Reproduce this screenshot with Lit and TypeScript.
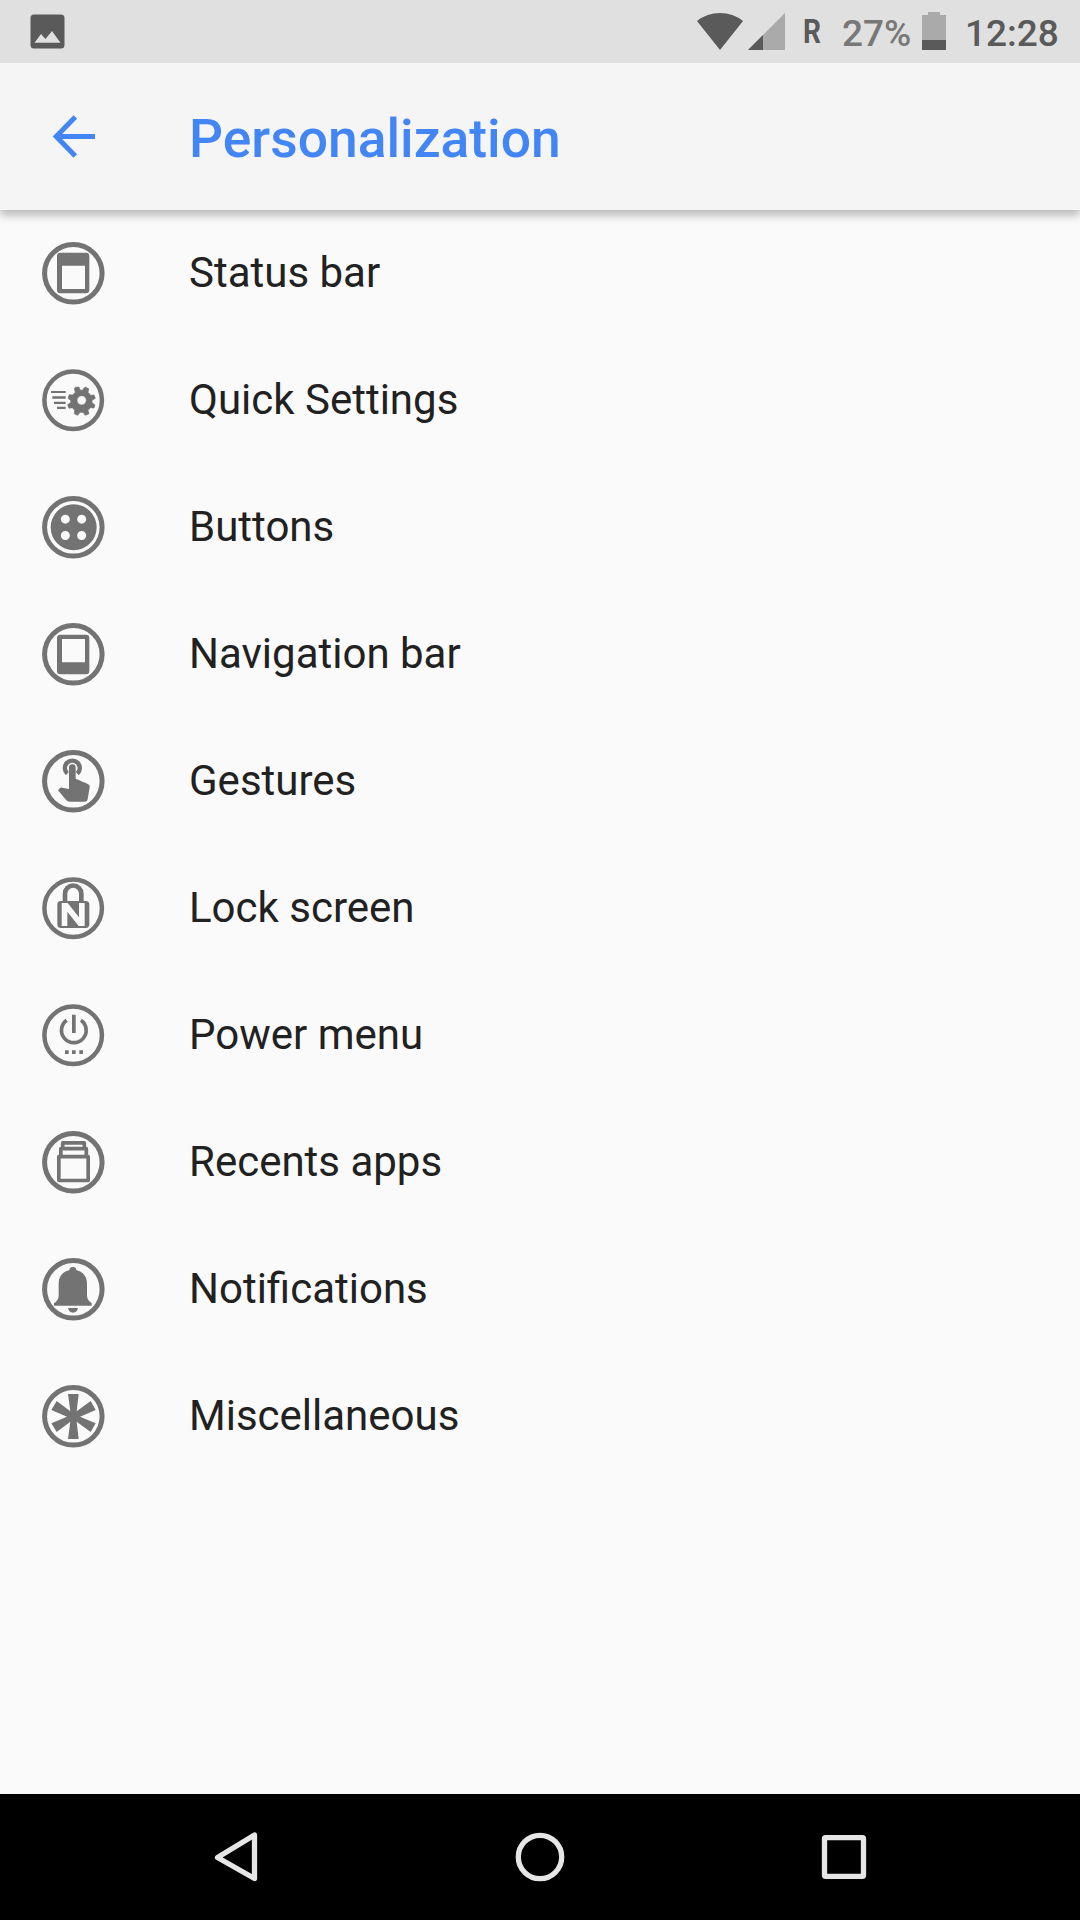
import { LitElement, html, css, svg } from "lit";
import { customElement } from "lit/decorators.js";

const thick = svg`<circle cx="94" cy="94" r="86.3" fill="none" stroke="#737373" stroke-width="15"/>`;
const thin = svg`<circle cx="93.5" cy="94" r="86.3" fill="none" stroke="#737373" stroke-width="13.500"/>`;

const items = [
  { label: "Status bar", icon: svg`${thick}
    <path fill-rule="evenodd" d="M55 32H132Q142 32 142 42V144Q142 154 132 154H55Q45 154 45 144V42Q45 32 55 32ZM60 71V141H129V71Z"/>` },
  { label: "Quick Settings", icon: svg`${thin}
    <path d="M27 66H71V72H27ZM31 82H71V89H31ZM36 98H71V105H36ZM45 113H71V120H45Z"/>
    <path fill-rule="evenodd" stroke="#737373" stroke-width="2" stroke-linejoin="round" d="M100 55L111 54L114 63Q118 64 122 63L129 54L140 59L138 70L146 79L156 78L160 88L150 94V101L159 108L156 117L145 116L138 124L141 134L130 139L123 130H114L107 139L97 134L98 124L91 116L81 118L77 107L86 101V94L78 88L82 77L92 78L100 70L97 59ZM119 80A14 14 0 1 0 119 108A14 14 0 1 0 119 80Z"/>` },
  { label: "Buttons", icon: svg`${thick}
    <path fill-rule="evenodd" d="M95 25A69 69 0 1 0 95 163A69 69 0 1 0 95 25ZM70 56A13.500 13.500 0 1 1 70 83A13.500 13.500 0 1 1 70 56ZM119 56A13.500 13.500 0 1 1 119 83A13.500 13.500 0 1 1 119 56ZM70 105A13.500 13.500 0 1 1 70 132A13.500 13.500 0 1 1 70 105ZM119 105A13.500 13.500 0 1 1 119 132A13.500 13.500 0 1 1 119 105Z"/>` },
  { label: "Navigation bar", icon: svg`${thick}
    <path fill-rule="evenodd" d="M55 35H132Q142 35 142 45V144Q142 154 132 154H55Q45 154 45 144V45Q45 35 55 35ZM60 48V118H129V48Z"/>` },
  { label: "Gestures", icon: svg`${thick}
    <path d="M81 77V53A10 10 0 0 1 101 53V86L138 102Q144 105 143 112L137 148Q136 155 129 155H83Q77 155 73 151L48 121L54 114Q57 112 61 113L81 117Z"/>
    <path d="M76 71A22.500 22.500 0 1 1 106 71" fill="none" stroke="#737373" stroke-width="13"/>` },
  { label: "Lock screen", icon: svg`${thin}
    <path d="M69 76V50A24.500 24.500 0 0 1 118 50V76" fill="none" stroke="#737373" stroke-width="14"/>
    <path fill-rule="evenodd" d="M57 72H131Q142 72 142 83V142Q142 153 131 153H57Q46 153 46 142V83Q46 72 57 72ZM59 78V147H76V104L110 147H128V78H111V121L77 78Z"/>` },
  { label: "Power menu", icon: svg`${thin}
    <path d="M90 32H101V87H90ZM69 139H80V150H69ZM90 139H101V150H90ZM112 139H123V150H112Z"/>
    <path d="M74 49A37 37 0 1 0 117 49" fill="none" stroke="#737373" stroke-width="11"/>` },
  { label: "Recents apps", icon: svg`${thick}
    <g fill="none" stroke="#737373" stroke-width="11" stroke-linejoin="round">
      <rect x="50.500" y="77" width="88" height="71.500"/>
      <path d="M56.500 73V53H133V73M62 50V35.500H127V50"/>
    </g>` },
  { label: "Notifications", icon: svg`${thick}
    <path d="M93 27Q102 27 103 36C124 42 135 56 135 77V112Q135 126 149 136V143H36V136Q50 127 50 112V77C50 56 61 42 82 36Q83 27 93 27ZM78 150H108Q105 164 93 164Q81 164 78 150Z"/>` },
  { label: "Miscellaneous", icon: svg`${thick}
    <path d="M78 27H110L104 79L146 48L161 75L114 95L161 115L146 141L104 110L110 162H78L85 110L44 141L28 115L75 95L28 75L44 48L85 79Z"/>` },
];

@customElement("app-root")
export class AppRoot extends LitElement {
  static styles = css`
    :host {
      display: flex;
      flex-direction: column;
      width: 1080px;
      height: 1920px;
      overflow: hidden;
      background: #fafafa;
      font-family: Roboto, "Liberation Sans", sans-serif;
    }
    svg { display: block; flex: none; }
    .status {
      flex: none;
      height: 63px;
      display: flex;
      align-items: center;
      background: #e0e0e0;
      color: #5a5a5a;
      font-weight: 500;
      white-space: nowrap;
    }
    .photo { margin-left: 30px; }
    .signals { margin-left: auto; }
    .roaming {
      width: 17px;
      margin-left: 17px;
      font-size: 33px;
      line-height: 41px;
      font-weight: 700;
      transform: scaleX(0.85);
      transform-origin: left;
    }
    .charge { width: 70px; margin-left: 22px; padding-top: 4px; font-size: 37px; line-height: 44px; color: #787878; }
    .battery { margin-left: 10px; }
    .clock { width: 94px; margin: 0 21px 0 19px; padding-top: 4px; font-size: 37px; line-height: 44px; }
    .bar {
      flex: none;
      height: 147px;
      display: flex;
      align-items: center;
      background: #f5f5f5;
      color: #4285f4;
      box-shadow: 0 5px 9px rgba(0, 0, 0, 0.28);
      clip-path: inset(0 0 -20px 0);
    }
    .back { margin-left: 52px; }
    .title {
      margin: 0 0 0 94px;
      padding-top: 4px;
      font-size: 53.4px;
      line-height: 62px;
      font-weight: 500;
    }
    .list { flex: 1; margin: 0; padding: 0; list-style: none; }
    .row {
      height: 127px;
      display: flex;
      align-items: center;
      font-size: 42px;
      color: #212121;
    }
    .label { padding-bottom: 2px; }
    .icon { width: 63px; height: 63px; margin: 0 84px 0 42px; fill: #737373; }
    .nav {
      flex: none;
      height: 126px;
      display: flex;
      justify-content: center;
      background: #000;
    }
  `;

  render() {
    return html`
      <header class="status">
        <svg class="photo" width="35" height="41" viewBox="0 0 35 41">
          <path fill="#5a5a5a" fill-rule="evenodd" d="M4 3.500H31Q34.500 3.500 34.500 7V34Q34.500 37.500 31 37.500H4Q.5 37.500 .5 34V7Q.5 3.500 4 3.500ZM4.500 31.800H30.500L22 20L15.500 28L11 23Z"/>
        </svg>
        <svg class="signals" width="90" height="63" viewBox="0 0 90 63">
          <path fill="#5a5a5a" d="M1 21Q11 13 24 13Q37 13 47 21L24 50Z"/>
          <path fill="#aaaaaa" d="M52 50L89 13V50Z"/>
          <path fill="#5a5a5a" d="M52 50L67 35V50Z"/>
        </svg>
        <span class="roaming">R</span>
        <span class="charge">27%</span>
        <svg class="battery" width="24" height="63" viewBox="0 0 24 63">
          <path fill="#aaaaaa" d="M0 15H6V12H18V15H24V41H0Z"/>
          <path fill="#5a5a5a" d="M0 40H24V50H0Z"/>
        </svg>
        <span class="clock">12:28</span>
      </header>
      <div class="bar">
        <svg class="back" width="43" height="49" viewBox="0 0 43 49" fill="none" stroke="#4285f4" stroke-width="5">
          <path d="M23.300 5L4.200 24.500L23.300 44M4.200 24.500H43"/>
        </svg>
        <h1 class="title">Personalization</h1>
      </div>
      <ul class="list">
        ${items.map((item) => html`
          <li class="row">
            <svg class="icon" viewBox="0 0 189 189">${item.icon}</svg>
            <span class="label">${item.label}</span>
          </li>`)}
      </ul>
      <footer class="nav">
        <svg width="720" height="126" viewBox="0 0 720 126" fill="none" stroke="#e6e6e6" stroke-width="5.300" stroke-linejoin="round">
          <path d="M37.500 63.500L74.500 41V84.500Z"/>
          <circle cx="360" cy="63" r="21.700"/>
          <rect x="644.500" y="43.700" width="39" height="38.600" rx="1"/>
        </svg>
      </footer>
    `;
  }
}
